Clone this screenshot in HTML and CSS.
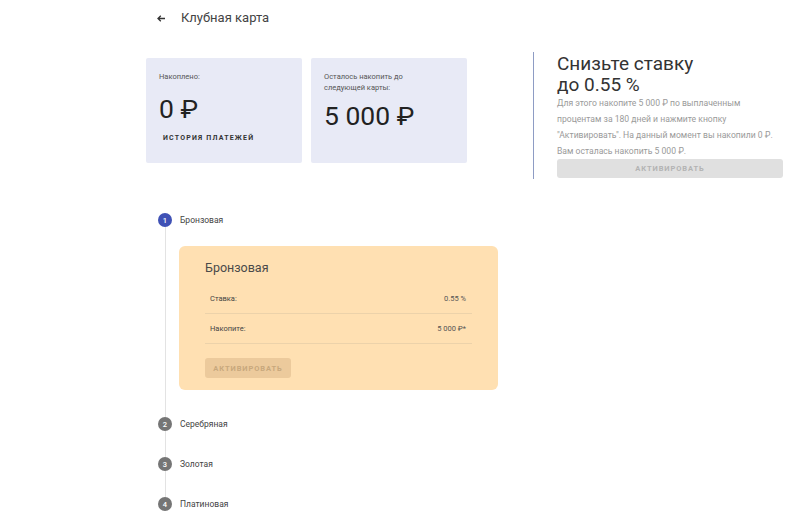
FILE: index.html
```html
<!DOCTYPE html>
<html lang="ru">
<head>
<meta charset="utf-8">
<title>Клубная карта</title>
<link rel="stylesheet" href="styles.css">
</head>
<body>
<header class="header">
  <span class="back">
    <svg width="8" height="7" viewBox="0 0 8 7"><path d="M8 3.5H1.5M3.8 0.8L1 3.5l2.8 2.7" fill="none" stroke="#333" stroke-width="1.3"/></svg>
  </span>
  <h1 class="title">Клубная карта</h1>
</header>

<section class="top">
  <div class="stat">
    <div class="stat-label">Накоплено:</div>
    <div class="stat-value">0 ₽</div>
    <button class="text-btn">ИСТОРИЯ ПЛАТЕЖЕЙ</button>
  </div>
  <div class="stat">
    <div class="stat-label">Осталось накопить до<br>следующей карты:</div>
    <div class="stat-value stat-value-2">5 000 ₽</div>
  </div>
  <div class="promo">
    <h2 class="promo-title">Снизьте ставку<br>до 0.55 %</h2>
    <p class="promo-text">Для этого накопите 5 000 ₽ по выплаченным<br>процентам за 180 дней и нажмите кнопку<br>"Активировать". На данный момент вы накопили 0 ₽.<br>Вам осталась накопить 5 000 ₽.</p>
    <button class="btn-disabled wide">АКТИВИРОВАТЬ</button>
  </div>
</section>

<section class="stepper">
  <div class="step">
    <div class="step-head"><span class="dot active">1</span><span class="step-label">Бронзовая</span></div>
    <div class="step-body first">
      <div class="level-card">
        <div class="level-title">Бронзовая</div>
        <div class="row"><span>Ставка:</span><span class="val">0.55 %</span></div>
        <div class="row"><span>Накопите:</span><span class="val">5 000 ₽*</span></div>
        <button class="btn-disabled small">АКТИВИРОВАТЬ</button>
      </div>
    </div>
  </div>
  <div class="step">
    <div class="step-head"><span class="dot">2</span><span class="step-label">Серебряная</span></div>
    <div class="step-body"></div>
  </div>
  <div class="step">
    <div class="step-head"><span class="dot">3</span><span class="step-label">Золотая</span></div>
    <div class="step-body"></div>
  </div>
  <div class="step">
    <div class="step-head"><span class="dot">4</span><span class="step-label">Платиновая</span></div>
  </div>
</section>
</body>
</html>
```

FILE: styles.css
```css
* { box-sizing: border-box; }
html, body { margin: 0; padding: 0; background: #fff; }
body {
  font-family: Roboto, "Noto Sans", "Liberation Sans", sans-serif;
  color: #333;
  width: 800px;
  height: 515px;
  overflow: hidden;
}
button { font-family: inherit; border: 0; cursor: pointer; }

.header {
  height: 36px;
  display: flex;
  align-items: center;
  padding-left: 157px;
}
.back { display: flex; width: 24px; }
.title {
  margin: 0;
  font-size: 13px;
  font-weight: 400;
  color: #444;
  line-height: 20px;
}

.top {
  display: flex;
  align-items: flex-start;
  padding-left: 146px;
  margin-top: 16px;
}
.stat {
  width: 156px;
  height: 105px;
  margin-top: 6px;
  margin-right: 9px;
  background: #e8eaf6;
  border-radius: 2px;
  padding: 13px 13px 0;
}
.stat-label {
  font-size: 7.5px;
  line-height: 11px;
  color: #555;
}
.stat-value {
  font-size: 26.5px;
  line-height: 28px;
  color: #222;
  margin-top: 13px;
}
.stat-value-2 { margin-top: 9px; }
.text-btn {
  background: none;
  padding: 0 4px;
  margin-top: 10px;
  font-size: 7px;
  font-weight: 700;
  letter-spacing: 1.2px;
  line-height: 10px;
  color: #333;
}

.promo {
  margin-left: 57px;
  width: 250px;
  border-left: 1px solid #8e9cc4;
  padding: 1px 0 1px 23px;
}
.promo-title {
  margin: 0;
  font-size: 19px;
  font-weight: 400;
  line-height: 21px;
  color: #333;
}
.promo-text {
  margin: 0;
  font-size: 8.6px;
  line-height: 16px;
  color: #9a9a9a;
  white-space: nowrap;
}
.btn-disabled {
  background: #e0e0e0;
  color: #b3b3b3;
  font-size: 7.5px;
  font-weight: 700;
  letter-spacing: 0.9px;
  border-radius: 3px;
  display: block;
}
.btn-disabled.wide {
  width: 226px;
  height: 19px;
}

.stepper {
  margin-top: 34px;
  padding-left: 158px;
}
.step-head {
  display: flex;
  align-items: center;
  height: 14px;
}
.dot {
  width: 14px;
  height: 14px;
  border-radius: 50%;
  background: #757575;
  color: #fff;
  font-size: 7.5px;
  font-weight: 500;
  display: flex;
  align-items: center;
  justify-content: center;
}
.dot.active { background: #3f51b5; }
.step-label {
  margin-left: 8px;
  font-size: 8.5px;
  color: #444;
}
.step-body {
  margin-left: 7px;
  border-left: 1px solid #e3e3e3;
  height: 26px;
}
.step-body.first {
  height: auto;
  padding: 19px 0 27px 13px;
}
.level-card {
  width: 319px;
  background: #ffe0b2;
  border-radius: 6px;
  padding: 14px 26px 12px;
}
.level-title {
  font-size: 12.5px;
  line-height: 16px;
  color: #4a4a4a;
  margin-bottom: 8px;
}
.row {
  display: flex;
  justify-content: space-between;
  align-items: center;
  height: 30px;
  padding: 0 6px 0 5px;
  border-bottom: 1px solid #ecd2aa;
  font-size: 7.5px;
  color: #444;
}
.row .val { color: #555; }
.btn-disabled.small {
  margin-top: 14px;
  width: 86px;
  height: 20px;
  background: #ecca9c;
  color: #c8a87c;
}
```
